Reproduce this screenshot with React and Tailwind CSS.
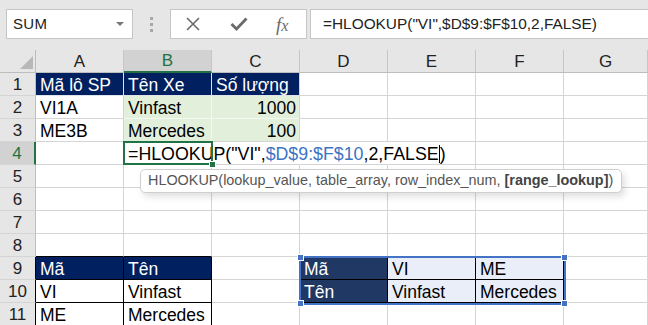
import React from "react";

const G = "border-[#d4d4d4]";

function Cell({ w = "w-[88px]", cls = "", children, right = false }) {
  return (
    <div
      className={`${w} h-full shrink-0 flex items-end ${right ? "justify-end pr-[3px]" : "pl-[4px]"} leading-[18px] pb-[1px] text-[17.5px] text-black border-r border-b whitespace-nowrap ${cls}`}
    >
      {children}
    </div>
  );
}

function RowHead({ n, active = false, cls = "" }) {
  return (
    <div
      className={`w-[36px] h-full shrink-0 flex items-end justify-center leading-[18px] pb-[1px] text-[17px] border-b border-[#d4d4d4] ${
        active
          ? "bg-[#d2d2d2] text-[#217346] border-r-2 border-r-[#217346]"
          : "bg-[#e6e6e6] text-[#222] border-r border-r-[#bdbdbd]"
      } ${cls}`}
    >
      {n}
    </div>
  );
}

function Row({ children }) {
  return <div className="flex h-[23px]">{children}</div>;
}

function Empty({ w = "w-[88px]", cls = G }) {
  return <Cell w={w} cls={cls} />;
}

export default function App() {
  return (
    <div className="w-[648px] h-[325px] overflow-hidden bg-white relative font-['Liberation_Sans',Arial,sans-serif]">
      {/* Formula bar */}
      <div className="h-[50px] bg-[#e6e6e6] flex items-start pt-[9px]">
        <div className="ml-[6px] w-[127px] h-[30px] bg-white border border-[#c6c6c6] flex items-center justify-between pl-[6px] pr-[8px]">
          <span className="text-[15px] text-[#222] tracking-[0.3px]">SUM</span>
          <span className="w-0 h-0 border-l-[4px] border-r-[4px] border-t-[4px] border-l-transparent border-r-transparent border-t-[#777]" />
        </div>
        <div className="w-[37px] h-[30px] flex flex-col items-center justify-center gap-[3px]">
          <span className="w-[3px] h-[3px] bg-[#a8a8a8]" />
          <span className="w-[3px] h-[3px] bg-[#a8a8a8]" />
          <span className="w-[3px] h-[3px] bg-[#a8a8a8]" />
        </div>
        <div className="w-[137px] h-[30px] bg-white border border-[#c6c6c6] flex items-center">
          <svg width="16" height="16" viewBox="0 0 16 16" className="ml-[14px]">
            <path d="M2 2 L14 14 M14 2 L2 14" stroke="#6a6a6a" strokeWidth="1.6" fill="none" />
          </svg>
          <svg width="18" height="14" viewBox="0 0 18 14" className="ml-[29px]">
            <path d="M1.5 7 L6.5 12 L16.5 1.5" stroke="#6a6a6a" strokeWidth="2.8" fill="none" />
          </svg>
          <span className="ml-[28px] font-['Liberation_Serif',serif] italic text-[19px] text-[#6a6a6a] leading-none">
            f<span className="text-[16px]">x</span>
          </span>
        </div>
        <div className="ml-[3px] flex-1 h-[30px] bg-white border-y border-l border-[#c6c6c6] flex items-center pl-[12px]">
          <span className="text-[15.4px] text-[#222] whitespace-nowrap">=HLOOKUP("VI",$D$9:$F$10,2,FALSE)</span>
        </div>
      </div>

      {/* Column headers */}
      <div className="flex h-[23px]">
        <div className="w-[36px] h-full shrink-0 bg-[#e6e6e6] border-r border-b border-[#bdbdbd] relative">
          <svg width="13" height="13" viewBox="0 0 13 13" className="absolute right-[2px] bottom-[3px]">
            <path d="M13 0 L13 13 L0 13 Z" fill="#b8b8b8" />
          </svg>
        </div>
        {["A", "B", "C", "D", "E", "F", "G"].map((c) => (
          <div
            key={c}
            className={`${c === "G" ? "w-[84px]" : "w-[88px]"} h-full shrink-0 flex items-end justify-center leading-[18px] pb-[1px] text-[17px] border-r border-r-[#c6c6c6] ${
              c === "B"
                ? "bg-[#d2d2d2] text-[#217346] border-b-2 border-b-[#217346]"
                : "bg-[#e6e6e6] text-[#222] border-b border-b-[#bdbdbd]"
            }`}
          >
            {c}
          </div>
        ))}
      </div>

      {/* Row 1 */}
      <Row>
        <RowHead n="1" />
        <Cell cls="bg-[#002060] border-[#dfe3ea] !text-white">Mã lô SP</Cell>
        <Cell cls="bg-[#002060] border-[#dfe3ea] !text-white">Tên Xe</Cell>
        <Cell cls="bg-[#002060] border-b-[#dfe3ea] border-r-[#d4d4d4] !text-white">Số lượng</Cell>
        <Empty />
        <Empty />
        <Empty />
        <Empty w="w-[84px]" />
      </Row>
      {/* Row 2 */}
      <Row>
        <RowHead n="2" />
        <Cell cls={G}>VI1A</Cell>
        <Cell cls="bg-[#e2efda] border-[#f3f8f0]">Vinfast</Cell>
        <Cell right cls="bg-[#e2efda] border-b-[#f3f8f0] border-r-[#d4d4d4]">1000</Cell>
        <Empty />
        <Empty />
        <Empty />
        <Empty w="w-[84px]" />
      </Row>
      {/* Row 3 */}
      <Row>
        <RowHead n="3" />
        <Cell cls={G}>ME3B</Cell>
        <Cell cls="bg-[#e2efda] border-[#f3f8f0] border-b-[#d4d4d4]">Mercedes</Cell>
        <Cell right cls="bg-[#e2efda] border-r-[#d4d4d4] border-b-[#d4d4d4]">100</Cell>
        <Empty />
        <Empty />
        <Empty />
        <Empty w="w-[84px]" />
      </Row>
      {/* Row 4 */}
      <Row>
        <RowHead n="4" active />
        <Empty />
        <div className="w-[88px] h-full shrink-0 relative z-10 border-b border-[#d4d4d4]">
          <div className="absolute left-[4px] bottom-[1px] leading-[18px] text-[17.8px] text-black whitespace-nowrap">
            =HLOOKUP("VI",<span className="text-[#3c74c4]">$D$9:$F$10</span>,2,FALSE<span className="inline-block w-px h-[18px] bg-black align-bottom" />)
          </div>
          <div className="absolute -inset-px border-2 border-[#217346]" />
          <div className="absolute right-[-4px] bottom-[-4px] w-[7px] h-[7px] bg-[#217346] border border-white" />
        </div>
        <Cell cls="border-b-[#d4d4d4] border-r-transparent" />
        <Cell cls="border-b-[#d4d4d4] border-r-transparent" />
        <Empty />
        <Empty />
        <Empty w="w-[84px]" />
      </Row>
      {[5, 6, 7].map((n) => (
        <Row key={n}>
          <RowHead n={String(n)} />
          <Empty />
          <Empty />
          <Empty />
          <Empty />
          <Empty />
          <Empty />
          <Empty w="w-[84px]" />
        </Row>
      ))}
      {/* Row 8 */}
      <Row>
        <RowHead n="8" />
        <Empty cls="border-r-[#d4d4d4] border-b-black" />
        <Empty cls="border-r-[#d4d4d4] border-b-black" />
        <Empty />
        <Empty />
        <Empty />
        <Empty />
        <Empty w="w-[84px]" />
      </Row>
      {/* Row 9 */}
      <Row>
        <RowHead n="9" cls="!border-r-black" />
        <Cell cls="bg-[#002060] border-black !text-white">Mã</Cell>
        <Cell cls="bg-[#002060] border-black !text-white">Tên</Cell>
        <Empty />
        <Cell cls="bg-[#203864] border-black !text-white">Mã</Cell>
        <Cell cls="bg-[#e9eef8] border-black">VI</Cell>
        <Cell cls="bg-[#e9eef8] border-black">ME</Cell>
        <Empty w="w-[84px]" />
      </Row>
      {/* Row 10 */}
      <Row>
        <RowHead n="10" cls="!border-r-black" />
        <Cell cls="border-black">VI</Cell>
        <Cell cls="border-black">Vinfast</Cell>
        <Empty />
        <Cell cls="bg-[#203864] border-black !text-white">Tên</Cell>
        <Cell cls="bg-[#e9eef8] border-black">Vinfast</Cell>
        <Cell cls="bg-[#e9eef8] border-black">Mercedes</Cell>
        <Empty w="w-[84px]" />
      </Row>
      {/* Row 11 */}
      <Row>
        <RowHead n="11" cls="!border-r-black" />
        <Cell cls="border-black">ME</Cell>
        <Cell cls="border-black">Mercedes</Cell>
        <Empty />
        <Empty />
        <Empty />
        <Empty />
        <Empty w="w-[84px]" />
      </Row>

      {/* Tooltip */}
      <div className="absolute left-[140px] top-[169px] w-[482px] h-[24px] bg-white border border-[#cfcfcf] rounded-[5px] shadow-[3px_4px_6px_rgba(0,0,0,0.12)] flex items-center pl-[7px] z-20">
        <span className="font-['Liberation_Sans',sans-serif] text-[14.4px] text-[#555] whitespace-nowrap">
          HLOOKUP(lookup_value, table_array, row_index_num, <b className="text-[#444]">[range_lookup]</b>)
        </span>
      </div>

      {/* Selection D9:F10 */}
      <div className="absolute left-[299px] top-[256px] w-[267px] h-[49px] border-2 border-[#4472c4] z-20" />
      <div className="absolute left-[297px] top-[254px] w-[7px] h-[7px] bg-[#4472c4] border border-white z-30" />
      <div className="absolute left-[297px] top-[300px] w-[7px] h-[7px] bg-[#4472c4] border border-white z-30" />
      <div className="absolute left-[561px] top-[254px] w-[7px] h-[7px] bg-[#4472c4] border border-white z-30" />
      <div className="absolute left-[561px] top-[300px] w-[7px] h-[7px] bg-[#4472c4] border border-white z-30" />
    </div>
  );
}
